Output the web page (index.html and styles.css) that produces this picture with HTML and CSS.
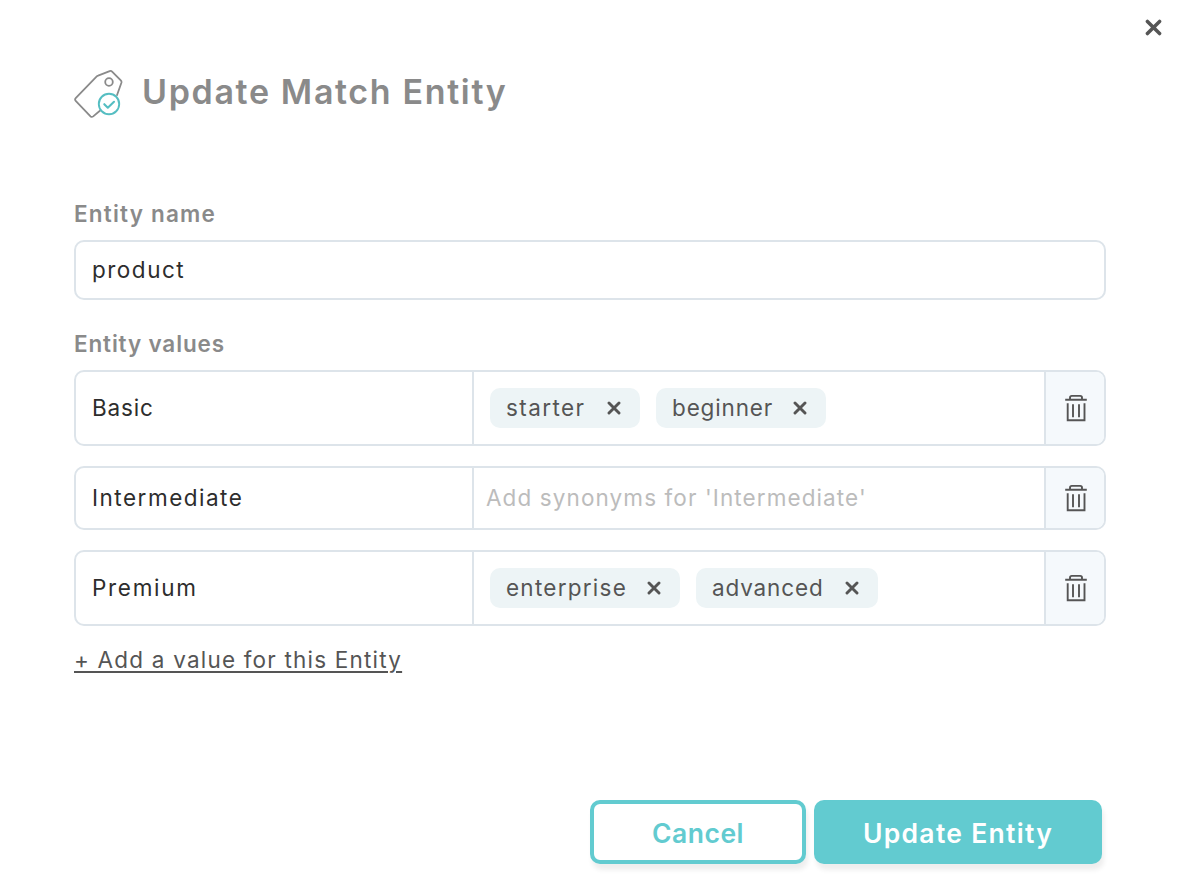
FILE: index.html
```html
<!DOCTYPE html>
<html lang="en">
<head>
<meta charset="utf-8">
<title>Update Match Entity</title>
<link rel="stylesheet" href="styles.css">
</head>
<body>
<svg class="defs" width="0" height="0">
  <symbol id="trash" viewBox="0 0 24 28"><path d="M1.2 5.8h21.6M6 5.8V3.7Q6 1.9 7.8 1.9h8.4Q18 1.9 18 3.7V5.8M3.7 9.3v16.9h16.8V9.3M9 10.3v13M15 10.3v13" fill="none" stroke="#555" stroke-width="1.9"/></symbol>
  <symbol id="cross" viewBox="0 0 14 14"><path d="M2 2l10 10M12 2L2 12" fill="none" stroke="#555" stroke-width="2.9" stroke-linecap="round"/></symbol>
</svg>
<main class="dialog">
  <button class="close" aria-label="Close"><svg width="17" height="17"><use href="#cross"/></svg></button>
  <header class="header">
    <svg class="tag" width="50" height="50" viewBox="0 0 50 50" fill="none">
      <path d="M26.5 40.2l-7.3 6.2q-1.4 1.1-2.7-.1L1.7 30.8q-1.2-1.3 0-2.6L22.5 6.7q.7-.7 1.6-1L35.7 1.1q1.4-.5 2.4.5l8.7 8.8q1 1 .6 2.3l-4.6 13" class="tag-line"/>
      <circle cx="35" cy="12" r="3.8" class="tag-line"/>
      <circle cx="35" cy="34" r="10.2" fill="#fff" stroke="#55bec2" stroke-width="1.9"/>
      <path d="M30.3 34.2l3.5 3.5 6.2-5.9" stroke="#55bec2" stroke-width="2.1" stroke-linecap="round" stroke-linejoin="round"/>
    </svg>
    <h1 class="title">Update Match Entity</h1>
  </header>
  <div class="label">Entity name</div>
  <div class="input">product</div>
  <div class="label values-label">Entity values</div>
  <div class="rows">
    <div class="row tall">
      <div class="name basic">Basic</div>
      <div class="synonyms">
        <span class="chip starter">starter<svg width="14" height="14"><use href="#cross"/></svg></span>
        <span class="chip beginner">beginner<svg width="14" height="14"><use href="#cross"/></svg></span>
      </div>
      <button class="delete" aria-label="Delete"><svg width="24" height="28"><use href="#trash"/></svg></button>
    </div>
    <div class="row">
      <div class="name">Intermediate</div>
      <div class="synonyms placeholder">Add synonyms for 'Intermediate'</div>
      <button class="delete" aria-label="Delete"><svg width="24" height="28"><use href="#trash"/></svg></button>
    </div>
    <div class="row tall">
      <div class="name premium">Premium</div>
      <div class="synonyms">
        <span class="chip enterprise">enterprise<svg width="14" height="14"><use href="#cross"/></svg></span>
        <span class="chip advanced">advanced<svg width="14" height="14"><use href="#cross"/></svg></span>
      </div>
      <button class="delete" aria-label="Delete"><svg width="24" height="28"><use href="#trash"/></svg></button>
    </div>
  </div>
  <a class="add">+ Add a value for this Entity</a>
  <footer class="actions">
    <button class="btn cancel">Cancel</button>
    <button class="btn update">Update Entity</button>
  </footer>
</main>
</body>
</html>
```
FILE: styles.css
```css
* { box-sizing: border-box; }
body { margin: 0; background: #fff; font: 22.5px/30px Inter, "Noto Sans", sans-serif; letter-spacing: .5px; color: #2d2d2d; }
button { font: inherit; letter-spacing: inherit; border: 0; background: none; padding: 0; }
svg { display: block; flex: none; }
.defs { position: absolute; }
.dialog { width: 1180px; height: 896px; padding: 0 74px; display: flex; flex-direction: column; overflow: hidden; }
.close { align-self: flex-end; margin: 19px -56px 0 0; height: 17px; }
.header { display: flex; align-items: center; gap: 18px; height: 50px; margin-top: 34px; }
.tag-line { stroke: #8a8a8a; stroke-width: 1.8; stroke-linejoin: round; }
.title { margin: -6px 0 0; font-size: 34px; line-height: 44px; font-weight: 600; color: #8a8a8a; letter-spacing: 1.65px; }
.label { margin-top: 79px; color: #8a8a8a; font-weight: 600; letter-spacing: 1.2px; }
.input { margin-top: 11px; height: 60px; padding: 13px 16px; border: 2px solid #dde4ea; border-radius: 10px; letter-spacing: 1.5px; }
.values-label { margin-top: 29px; letter-spacing: .85px; }
.rows { display: flex; flex-direction: column; gap: 20px; margin-top: 11px; }
.row { display: grid; grid-template-columns: 398px 570px 60px; height: 64px; border: 2px solid #dde4ea; border-radius: 10px; overflow: hidden; }
.tall { height: 76px; }
.name { display: flex; align-items: center; padding-left: 16px; border-right: 2px solid #dde4ea; letter-spacing: 1.5px; }
.basic { letter-spacing: .8px; }
.premium { letter-spacing: 1.7px; }
.synonyms { display: flex; align-items: center; gap: 16px; padding-left: 16px; }
.placeholder { padding-left: 12px; color: #bcbcbc; letter-spacing: 1.1px; }
.chip { display: flex; align-items: center; justify-content: space-between; height: 40px; padding: 0 19px 0 16px; border-radius: 10px; background: #edf4f6; color: #555; }
.starter { width: 150px; letter-spacing: 1.4px; }
.beginner { width: 170px; letter-spacing: .85px; }
.enterprise { width: 190px; letter-spacing: 1.25px; }
.advanced { width: 182px; letter-spacing: .85px; }
.delete { display: flex; align-items: center; justify-content: center; border-left: 2px solid #dde4ea; background: #f5f9fc; }
.rows .delete { padding-left: 2px; }
.add { align-self: flex-start; margin-top: 19px; color: #555; letter-spacing: 1.2px; text-decoration: underline; text-decoration-thickness: 2px; text-underline-offset: 3px; }
.actions { display: flex; justify-content: flex-end; gap: 8px; margin: 125px 4px 0 0; }
.btn { height: 64px; padding-top: 1px; border-radius: 10px; font-size: 26.5px; font-weight: 600; box-shadow: 2px 6px 5px rgba(0,0,0,.07); }
.cancel { width: 216px; border: 4px solid #62cbd0; background: #fff; color: #62cbd0; }
.update { width: 288px; background: #62cbd0; color: #fff; letter-spacing: 1.3px; }
```
